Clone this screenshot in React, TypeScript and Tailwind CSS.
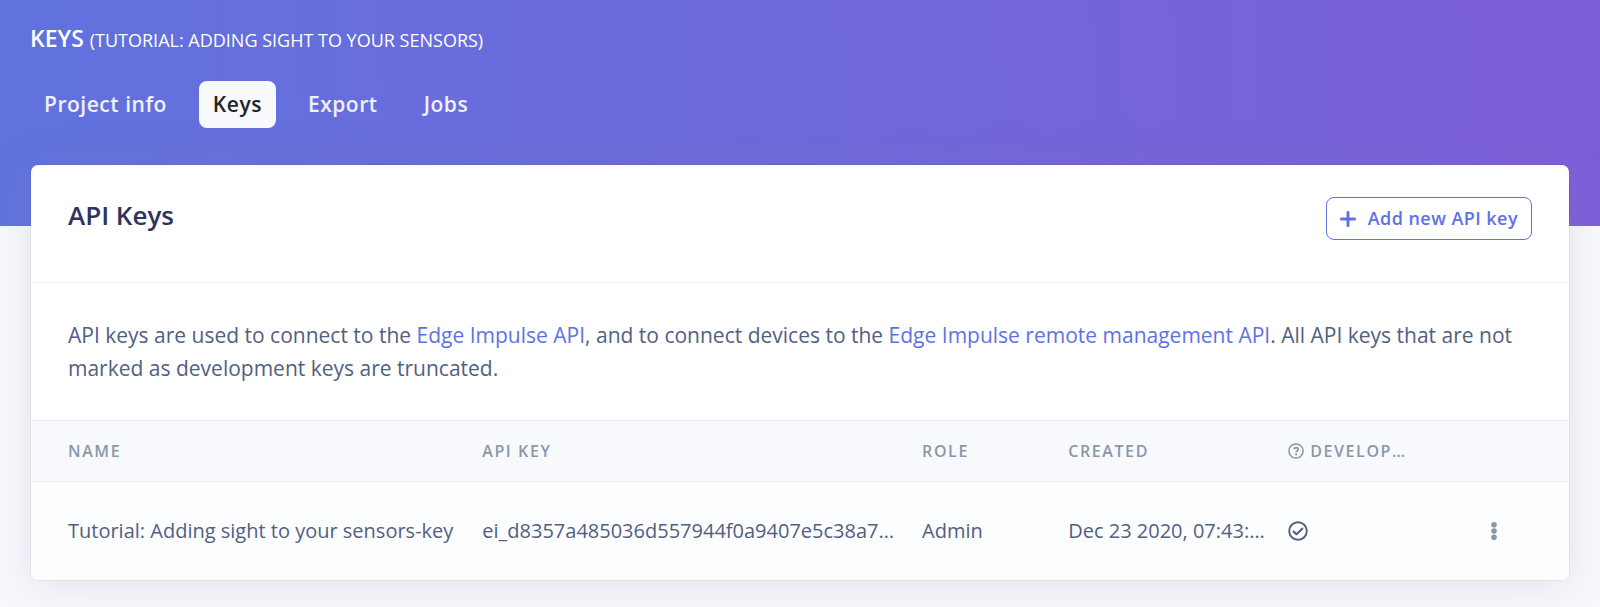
import clsx from "clsx";

interface ApiKey {
  name: string;
  apiKey: string;
  role: string;
  created: string;
  isDevelopmentKey: boolean;
}

const tabs = ["Project info", "Keys", "Export", "Jobs"];

const apiKeys: ApiKey[] = [
  {
    name: "Tutorial: Adding sight to your sensors-key",
    apiKey: "ei_d8357a485036d557944f0a9407e5c38a7…",
    role: "Admin",
    created: "Dec 23 2020, 07:43:…",
    isDevelopmentKey: true,
  },
];

const PlusIcon = () => (
  <svg viewBox="0 0 16 16" className="h-4 w-4" aria-hidden="true">
    <path d="M8 1.4v13.2M1.4 8h13.2" stroke="currentColor" strokeWidth="2.9" strokeLinecap="round" />
  </svg>
);

const QuestionIcon = () => (
  <svg viewBox="0 0 16 16" className="h-4 w-4 shrink-0" fill="none" aria-hidden="true">
    <circle cx="8" cy="8" r="7.1" stroke="currentColor" strokeWidth="1.5" />
    <path
      d="M5.9 6.3C6.2 5.2 7 4.7 8.1 4.7c1.2 0 2.1.7 2.1 1.7 0 1.4-2 1.4-2 2.8"
      stroke="currentColor"
      strokeWidth="1.7"
    />
    <circle cx="8.1" cy="11.3" r="1.1" fill="currentColor" />
  </svg>
);

const CheckCircleIcon = () => (
  <svg viewBox="0 0 20 20" className="h-5 w-5" fill="none" role="img" aria-label="Development key">
    <circle cx="10" cy="10" r="8.8" stroke="currentColor" strokeWidth="1.9" />
    <path
      d="M5.6 10.6l2.9 2.6 5.8-5.5"
      stroke="currentColor"
      strokeWidth="2.1"
      strokeLinecap="round"
      strokeLinejoin="round"
    />
  </svg>
);

const DotsIcon = () => (
  <svg viewBox="0 0 6 20" className="h-5 w-2" fill="currentColor" aria-hidden="true">
    <circle cx="3" cy="3.7" r="2.8" />
    <circle cx="3" cy="10" r="2.8" />
    <circle cx="3" cy="16.3" r="2.8" />
  </svg>
);

const Header = () => (
  <header className="bg-linear-[87deg] from-[#6072dd] to-[#7d5eda] px-[30px] pt-[22px] pb-[98px] text-white">
    <h1 className="text-[23px] leading-8 font-semibold uppercase">
      Keys <small className="text-[18px] font-normal">(Tutorial: Adding sight to your sensors)</small>
    </h1>
    <nav className="mt-[25px] flex gap-[18px]">
      {tabs.map((tab) => (
        <a
          key={tab}
          href="#"
          aria-current={tab === "Keys" ? "page" : undefined}
          className={clsx(
            "rounded-lg px-[14px] py-[7px] text-[21px] leading-[33px] font-semibold tracking-wide",
            tab === "Keys" ? "bg-[#f8f9fc] text-[#212529]" : "text-white/90"
          )}
        >
          {tab}
        </a>
      ))}
    </nav>
  </header>
);

const KeysTable = () => (
  <table className="w-full table-fixed text-left">
    <colgroup>
      <col className="w-[28.3%]" />
      <col className="w-[28.6%]" />
      <col className="w-[9.5%]" />
      <col className="w-[14.3%]" />
      <col className="w-[9.5%]" />
      <col />
    </colgroup>
    <thead className="border-y border-[#e9ecef] bg-[#f8f9fd] text-[16px] leading-6 tracking-widest text-[#8898aa] uppercase">
      <tr>
        <th className="py-[18px] pr-4 pl-[37px] font-semibold">Name</th>
        <th className="px-4 font-semibold">API key</th>
        <th className="px-4 font-semibold">Role</th>
        <th className="px-4 font-semibold">Created</th>
        <th className="px-4 font-semibold">
          <span className="flex items-center gap-1.5 whitespace-nowrap">
            <QuestionIcon />
            Develop…
          </span>
        </th>
        <th aria-label="Actions" />
      </tr>
    </thead>
    <tbody className="bg-[#fcfdff] text-[20px] leading-[30px]">
      {apiKeys.map((key) => (
        <tr key={key.apiKey}>
          <td className="py-[34px] pl-[37px] whitespace-nowrap">{key.name}</td>
          <td className="px-4 whitespace-nowrap">{key.apiKey}</td>
          <td className="px-4">{key.role}</td>
          <td className="px-4 whitespace-nowrap">{key.created}</td>
          <td className="px-4">{key.isDevelopmentKey && <CheckCircleIcon />}</td>
          <td>
            <button
              type="button"
              aria-label="Key options"
              className="mx-auto flex h-8 w-8 items-center justify-center text-[#8898aa]"
            >
              <DotsIcon />
            </button>
          </td>
        </tr>
      ))}
    </tbody>
  </table>
);

export default function App() {
  return (
    <div className="min-h-screen bg-[#f8f9fe] font-['Open_Sans',sans-serif] text-[#525f7f]">
      <Header />
      <main className="-mt-[62px] px-[30px] pb-[27px]">
        <section className="overflow-hidden rounded-lg border border-black/5 bg-white bg-clip-padding shadow-[0_4px_44px_0_rgba(125,130,148,0.18)]">
          <div className="flex items-start justify-between border-b border-black/5 px-[37px] pt-8 pb-[42px]">
            <h2 className="text-[26px] leading-9 font-semibold text-[#32325d]">API Keys</h2>
            <button
              type="button"
              className="flex items-center gap-3 rounded-lg border border-[#5e72e4] px-[13px] py-[6px] text-[18px] leading-[29px] font-semibold tracking-wide text-[#5e72e4]"
            >
              <PlusIcon />
              Add new API key
            </button>
          </div>
          <p className="px-[37px] pt-9 pb-[35px] text-[21px] leading-[33px]">
            API keys are used to connect to the{" "}
            <a href="#" className="text-[#5e72e4]">
              Edge Impulse API
            </a>
            , and to connect devices to the{" "}
            <a href="#" className="text-[#5e72e4]">
              Edge Impulse remote management API
            </a>
            . All API keys that are not marked as development keys are truncated.
          </p>
          <KeysTable />
        </section>
      </main>
    </div>
  );
}
